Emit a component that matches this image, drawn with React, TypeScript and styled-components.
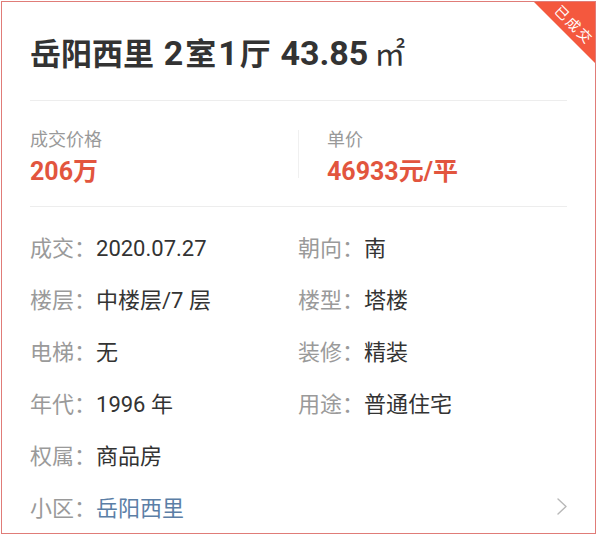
import styled, { createGlobalStyle } from "styled-components";

const GlobalStyle = createGlobalStyle`
  html, body {
    margin: 0;
    padding: 0;
    background: #ffffff;
  }
  body {
    font-family: Roboto, "Noto Sans CJK SC", sans-serif;
  }
`;

const Card = styled.section`
  position: relative;
  box-sizing: border-box;
  width: 595px;
  height: 533px;
  margin: 1px;
  padding: 0 28px;
  border: 1px solid #e07c78;
  background: #ffffff;
  overflow: hidden;
`;

const Ribbon = styled.div`
  position: absolute;
  top: 0;
  right: 0;
  width: 61px;
  height: 61px;
  background: #f4583e;
  clip-path: polygon(0 0, 100% 0, 100% 100%);
`;

const RibbonText = styled.span`
  position: absolute;
  left: 10px;
  top: 15px;
  width: 60px;
  line-height: 16px;
  text-align: center;
  font-size: 14px;
  letter-spacing: 2px;
  color: #ffffff;
  transform: rotate(45deg);
`;

const Header = styled.header`
  display: flex;
  align-items: center;
  box-sizing: border-box;
  height: 99px;
  padding-top: 4px;
  border-bottom: 1px solid #ededed;
`;

const Title = styled.h1`
  margin: 0;
  font-size: 31px;
  line-height: 1;
  font-weight: 700;
  color: #333333;
  white-space: nowrap;
`;

const TitleNum = styled.span`
  font-size: 34px;
  margin: 0 2px;
`;

const Unit = styled.span`
  margin-left: 4px;
  font-weight: 400;
`;

const StatsRow = styled.div`
  display: flex;
  align-items: flex-start;
  padding: 28px 0 19px;
  border-bottom: 1px solid #ededed;
`;

const StatCell = styled.div<{ $right?: boolean }>`
  display: flex;
  flex-direction: column;
  gap: 6px;
  flex: ${({ $right }) => ($right ? "1" : "0 0 268px")};
  padding-left: ${({ $right }) => ($right ? "28px" : "0")};
`;

const StatLabel = styled.span`
  font-size: 18px;
  line-height: 22px;
  color: #999999;
`;

const StatValue = styled.span`
  font-size: 25px;
  line-height: 30px;
  font-weight: 700;
  color: #e2553e;
`;

const VDivider = styled.div`
  width: 1px;
  height: 48px;
  margin-top: 1px;
  background: #f0f0f0;
`;

const InfoGrid = styled.div`
  display: grid;
  grid-template-columns: 268px 1fr;
  grid-auto-rows: 52px;
  padding-top: 13px;
`;

const InfoItem = styled.div<{ $wide?: boolean }>`
  display: flex;
  align-items: center;
  justify-content: space-between;
  grid-column: ${({ $wide }) => ($wide ? "1 / -1" : "auto")};
  font-size: 22px;
`;

const InfoText = styled.span`
  white-space: nowrap;
`;

const InfoLabel = styled.span`
  color: #9a9a9a;
`;

const InfoValue = styled.span<{ $link?: boolean }>`
  color: ${({ $link }) => ($link ? "#5b7ea6" : "#333333")};
`;

const Chevron = () => (
  <svg width="10" height="17" viewBox="0 0 10 17" fill="none">
    <polyline
      points="1,1 9,8.5 1,16"
      stroke="#b8b8b8"
      strokeWidth="1.4"
      strokeLinecap="round"
      strokeLinejoin="round"
    />
  </svg>
);

const info = [
  { label: "成交", value: "2020.07.27" },
  { label: "朝向", value: "南" },
  { label: "楼层", value: "中楼层/7 层" },
  { label: "楼型", value: "塔楼" },
  { label: "电梯", value: "无" },
  { label: "装修", value: "精装" },
  { label: "年代", value: "1996 年" },
  { label: "用途", value: "普通住宅" },
  { label: "权属", value: "商品房" },
];

const App = () => {
  return (
    <>
      <GlobalStyle />
      <Card>
        <Ribbon>
          <RibbonText>已成交</RibbonText>
        </Ribbon>
        <Header>
          <Title>
            岳阳西里 <TitleNum>2</TitleNum>室<TitleNum>1</TitleNum>厅{" "}
            <TitleNum>43.85</TitleNum>
            <Unit>㎡</Unit>
          </Title>
        </Header>
        <StatsRow>
          <StatCell>
            <StatLabel>成交价格</StatLabel>
            <StatValue>206万</StatValue>
          </StatCell>
          <VDivider />
          <StatCell $right>
            <StatLabel>单价</StatLabel>
            <StatValue>46933元/平</StatValue>
          </StatCell>
        </StatsRow>
        <InfoGrid>
          {info.map((item) => (
            <InfoItem key={item.label}>
              <InfoText>
                <InfoLabel>{item.label}：</InfoLabel>
                <InfoValue>{item.value}</InfoValue>
              </InfoText>
            </InfoItem>
          ))}
          <InfoItem $wide>
            <InfoText>
              <InfoLabel>小区：</InfoLabel>
              <InfoValue $link>岳阳西里</InfoValue>
            </InfoText>
            <Chevron />
          </InfoItem>
        </InfoGrid>
      </Card>
    </>
  );
};

export default App;
